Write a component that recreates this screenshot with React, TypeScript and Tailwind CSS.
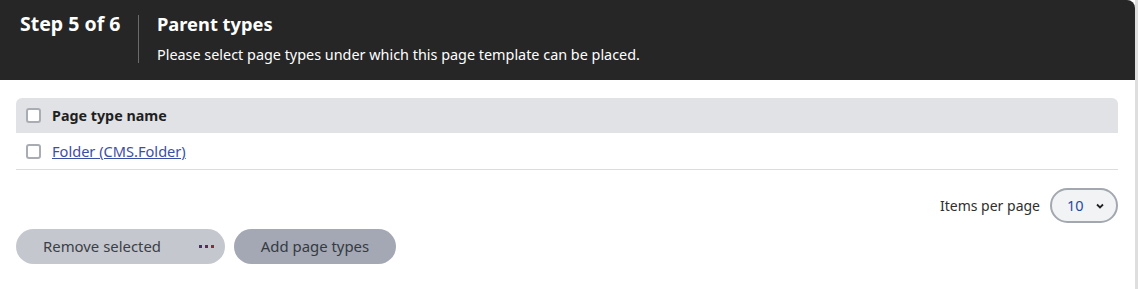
import React from "react";

const font = { fontFamily: '"Noto Sans", "Open Sans", sans-serif' };

function Checkbox() {
  return <span className="inline-block w-[15px] h-[15px] rounded-[3px] border-2 border-[#a9acb2] bg-white shrink-0" />;
}

export default function App() {
  return (
    <div className="w-[1138px] h-[289px] bg-white flex" style={font}>
      <div className="flex-1 flex flex-col">
        <div className="h-[80px] bg-[#262626] rounded-tr-[8px] flex pt-[12px]">
          <div className="w-[139px] pl-[20px] border-r border-[#6b6b6b] h-[48px] mt-[3px]">
            <div className="text-white font-bold text-[19.5px] leading-[22px] -mt-[2px]">Step 5 of 6</div>
          </div>
          <div className="pl-[18px]">
            <div className="text-white font-bold text-[18.3px] leading-[22px] mt-[1px]">Parent types</div>
            <div className="text-white text-[14.4px] leading-[20px] mt-[10px]">
              Please select page types under which this page template can be placed.
            </div>
          </div>
        </div>
        <div className="px-[16px] pr-[17px] pt-[18px]">
          <div className="h-[35px] bg-[#e1e2e6] rounded-t-[6px] flex items-center pl-[10px] gap-[11px]">
            <Checkbox />
            <span className="text-[14.3px] font-bold text-[#1f1f1f]">Page type name</span>
          </div>
          <div className="h-[37px] border-b border-[#dcdcdc] flex items-center pl-[10px] gap-[11px] pt-[1px]">
            <Checkbox />
            <a href="#" className="text-[14.6px] text-[#3b4ea6] underline">Folder (CMS.Folder)</a>
          </div>
          <div className="flex justify-end items-center gap-[10px] mt-[18px]">
            <span className="text-[14px] text-[#2f2f2f]">Items per page</span>
            <div className="w-[68px] h-[35px] rounded-full border-2 border-[#a3a7b0] bg-[#f2f3f5] flex items-center justify-between pl-[15px] pr-[11px]">
              <span className="text-[14.5px] text-[#1f4a9e]">10</span>
              <svg width="10" height="8" viewBox="0 0 10 8"><path d="M2 2.5 L5 5.5 L8 2.5" stroke="#222" strokeWidth="1.8" fill="none" /></svg>
            </div>
          </div>
          <div className="flex gap-[9px] mt-[6px]">
            <div className="w-[209px] h-[35px] rounded-full bg-[#c4c7ce] flex items-center justify-between pl-[27px] pr-[11px]">
              <span className="text-[14.9px] text-[#3c3f46]">Remove selected</span>
              <span className="flex gap-[3px]">
                <span className="w-[3px] h-[3px] bg-[#4a3060]" />
                <span className="w-[3px] h-[3px] bg-[#5a2d55]" />
                <span className="w-[3px] h-[3px] bg-[#8a2b3a]" />
              </span>
            </div>
            <div className="w-[162px] h-[35px] rounded-full bg-[#a3a8b4] flex items-center justify-center">
              <span className="text-[14.9px] text-[#363a42]">Add page types</span>
            </div>
          </div>
        </div>
      </div>
      <div className="w-[3px] bg-[#dedede]" />
    </div>
  );
}
